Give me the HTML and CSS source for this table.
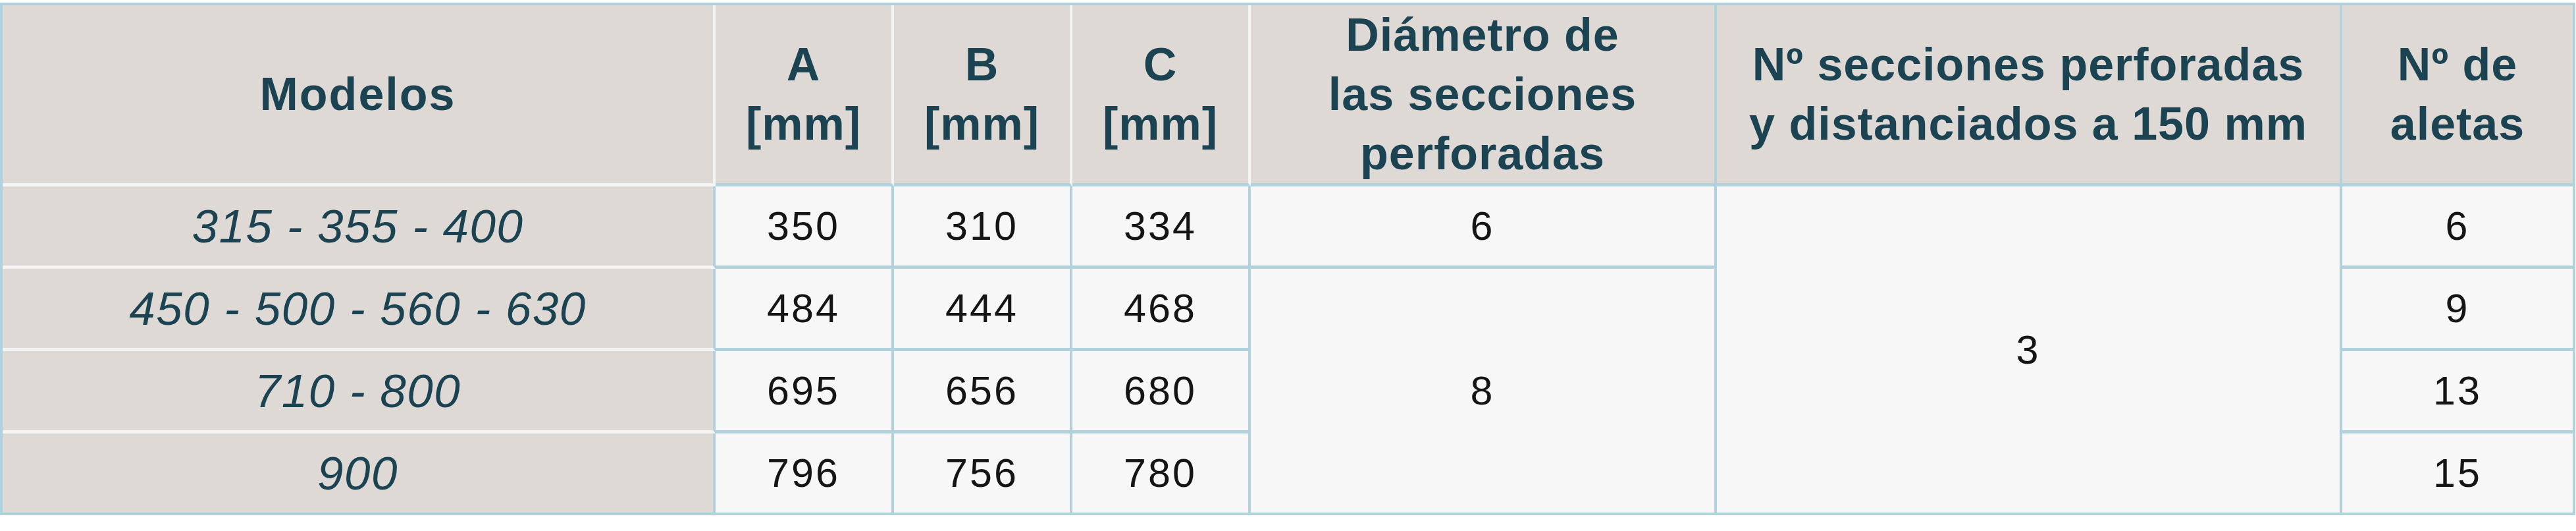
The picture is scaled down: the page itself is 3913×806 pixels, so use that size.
FILE: index.html
```html
<!DOCTYPE html>
<html lang="es">
<head>
  <meta charset="UTF-8" />
  <meta name="viewport" content="width=device-width, initial-scale=1.0"/>
  <title>Modelos - dimensiones</title>
  <link rel="stylesheet" href="styles.css">
</head>
<body>
  <table class="spec-table">
    <colgroup>
      <col class="col-model">
      <col class="col-dim">
      <col class="col-dim">
      <col class="col-dim">
      <col class="col-diam">
      <col class="col-sec">
      <col class="col-fins">
    </colgroup>
    <thead>
      <tr class="head-row">
        <th class="model-head">Modelos</th>
        <th>A<br>[mm]</th>
        <th>B<br>[mm]</th>
        <th>C<br>[mm]</th>
        <th class="blue-right">Diámetro de<br>las secciones<br>perforadas</th>
        <th class="blue-right">Nº secciones perforadas<br>y distanciados a 150 mm</th>
        <th class="last">Nº de<br>aletas</th>
      </tr>
    </thead>
    <tbody>
      <tr class="body-row">
        <td class="model">315 - 355 - 400</td>
        <td>350</td>
        <td>310</td>
        <td>334</td>
        <td>6</td>
        <td rowspan="4" class="no-bottom">3</td>
        <td class="last">6</td>
      </tr>
      <tr class="body-row">
        <td class="model">450 - 500 - 560 - 630</td>
        <td>484</td>
        <td>444</td>
        <td>468</td>
        <td rowspan="3" class="no-bottom">8</td>
        <td class="last">9</td>
      </tr>
      <tr class="body-row">
        <td class="model">710 - 800</td>
        <td>695</td>
        <td>656</td>
        <td>680</td>
        <td class="last">13</td>
      </tr>
      <tr class="body-row end-row">
        <td class="model">900</td>
        <td>796</td>
        <td>756</td>
        <td>780</td>
        <td class="last">15</td>
      </tr>
    </tbody>
  </table>
</body>
</html>
```
FILE: styles.css
```css
body {
  margin: 4px 0 0 0;
  background-color: #ffffff;
  font-family: 'Liberation Sans', Arial, sans-serif;
}

.spec-table {
  width: 3912px;
  table-layout: fixed;
  border-collapse: separate;
  border-spacing: 0;
  border: 4px solid #b1d1dd;
}

.col-model { width: 1083px; }
.col-dim { width: 271px; }
.col-diam { width: 708px; }
.col-sec { width: 950px; }
.col-fins { width: 350px; }

th, td {
  padding: 0;
  text-align: center;
  vertical-align: middle;
  border-right: 4px solid #b1d1dd;
  border-bottom: 5px solid #b1d1dd;
}

/* cabecera */
th {
  height: 270px;
  background-color: #ded9d5;
  color: #1b4352;
  font-size: 70px;
  font-weight: bold;
  line-height: 90px;
  letter-spacing: 1px;
  border-right-color: #f3f5f5;
}

th.model-head {
  letter-spacing: 2px;
  border-bottom-color: #f3f5f5;
}

th.blue-right {
  border-right-color: #b1d1dd;
}

/* filas */
td {
  height: 120px;
  background-color: #f7f7f7;
  color: #151515;
  font-size: 61px;
  letter-spacing: 3px;
}

td.model {
  background-color: #ded9d5;
  color: #1b4352;
  font-size: 71px;
  font-style: italic;
  letter-spacing: 1.5px;
  border-bottom-color: #f3f5f5;
}

.last {
  border-right: none;
}

.end-row td,
td.no-bottom {
  border-bottom: none;
}
```
